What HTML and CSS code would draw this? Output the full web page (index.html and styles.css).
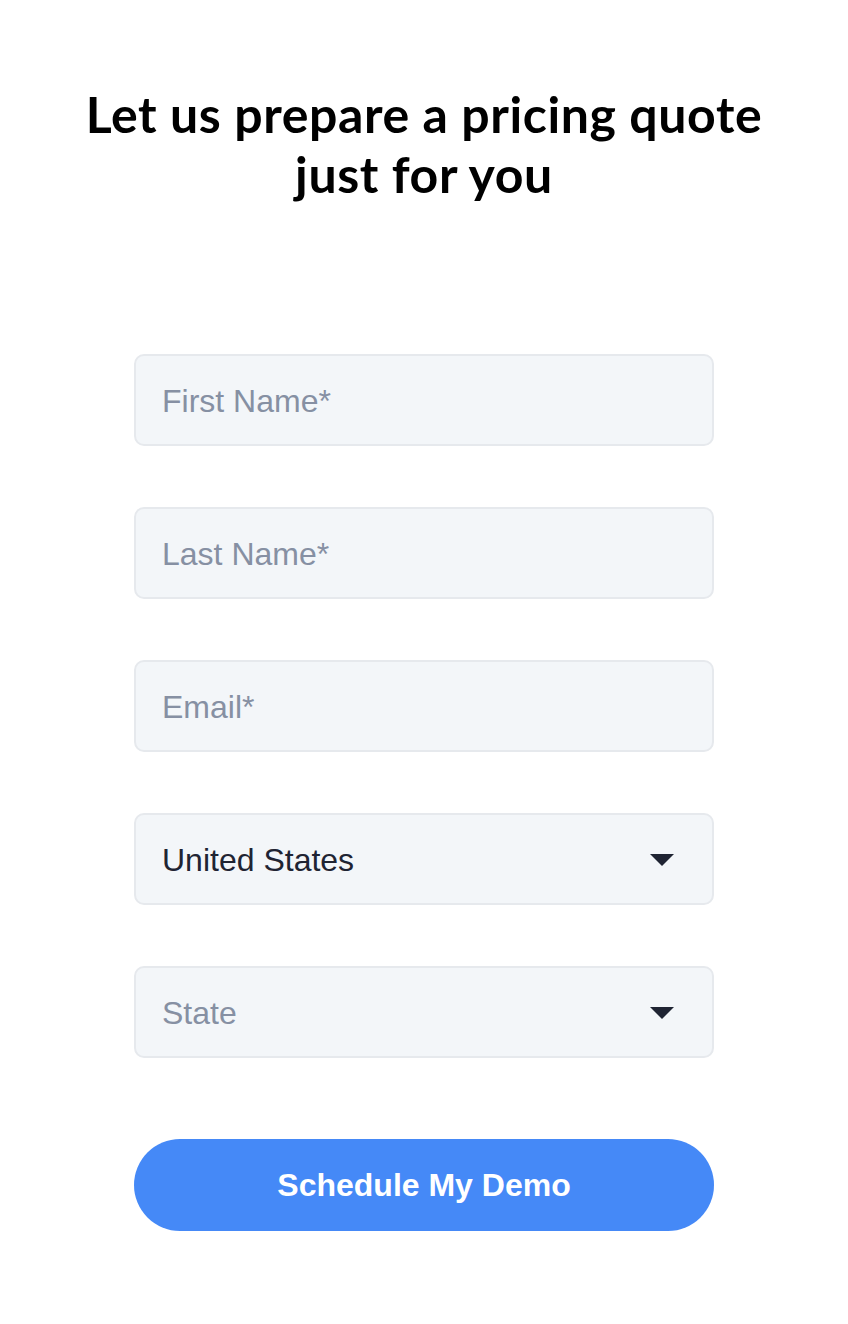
FILE: index.html
```html
<!DOCTYPE html>
<html lang="en">
<head>
<meta charset="utf-8">
<title>Pricing quote</title>
<link rel="stylesheet" href="styles.css">
</head>
<body>
<main class="page">
  <h1 class="title">Let us prepare a pricing quote<br>just for you</h1>
  <form class="form">
    <div class="field"><span class="placeholder">First Name*</span></div>
    <div class="field"><span class="placeholder">Last Name*</span></div>
    <div class="field"><span class="placeholder">Email*</span></div>
    <div class="field select"><span class="value">United States</span><span class="caret"></span></div>
    <div class="field select"><span class="placeholder">State</span><span class="caret"></span></div>
    <button type="button" class="submit">Schedule My Demo</button>
  </form>
</main>
</body>
</html>
```
FILE: styles.css
```css
html, body {
  margin: 0;
  padding: 0;
  background: #ffffff;
}
.page {
  width: 848px;
  padding-top: 84px;
  display: flex;
  flex-direction: column;
  align-items: center;
}
.title {
  margin: 0;
  font-family: "Lato", "Open Sans", sans-serif;
  font-weight: 700;
  font-size: 50px;
  line-height: 60px;
  color: #000000;
  text-align: center;
  letter-spacing: 0.6px;
}
.form {
  margin-top: 150px;
  width: 580px;
  display: flex;
  flex-direction: column;
  gap: 61px;
}
.field {
  box-sizing: border-box;
  height: 92px;
  border: 2px solid #e6e9ed;
  border-radius: 10px;
  background: #f3f6f9;
  padding: 2px 38px 0 26px;
  display: flex;
  align-items: center;
  justify-content: space-between;
  font-family: "Liberation Sans", Arial, sans-serif;
  font-size: 32px;
}
.placeholder {
  color: #8690a3;
}
.value {
  color: #1f2433;
}
.caret {
  width: 0;
  height: 0;
  border-left: 12px solid transparent;
  border-right: 12px solid transparent;
  border-top: 12px solid #1f2433;
}
.submit {
  margin-top: 20px;
  height: 92px;
  border: none;
  border-radius: 46px;
  background: #4589f7;
  color: #ffffff;
  font-family: "Liberation Sans", Arial, sans-serif;
  font-weight: 700;
  font-size: 32px;
  cursor: pointer;
}
```
